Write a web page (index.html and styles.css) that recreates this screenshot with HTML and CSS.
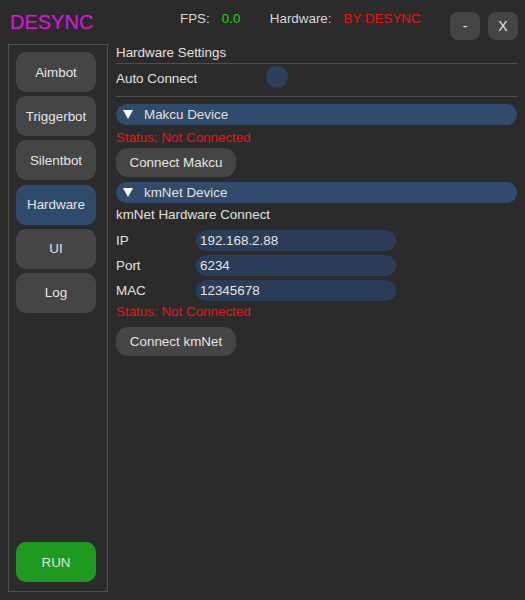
FILE: index.html
```html
<!DOCTYPE html>
<html>
<head>
<meta charset="utf-8">
<link rel="stylesheet" href="styles.css">
</head>
<body>
<div class="app">
  <header class="topbar">
    <div class="brand">DESYNC</div>
    <div class="stat"><span class="stat-label">FPS:</span><span class="fps">0.0</span></div>
    <div class="stat hw"><span class="stat-label">Hardware:</span><span class="by">BY DESYNC</span></div>
    <div class="win-btns">
      <button class="win-btn">-</button>
      <button class="win-btn">X</button>
    </div>
  </header>
  <div class="body">
    <nav class="sidebar">
      <button class="nav-btn">Aimbot</button>
      <button class="nav-btn">Triggerbot</button>
      <button class="nav-btn">Silentbot</button>
      <button class="nav-btn active">Hardware</button>
      <button class="nav-btn">UI</button>
      <button class="nav-btn">Log</button>
      <button class="nav-btn run">RUN</button>
    </nav>
    <main class="content">
      <div class="line title-line">Hardware Settings</div>
      <div class="sep sep-1"></div>
      <div class="toggle-row">
        <span class="toggle-label">Auto Connect</span>
        <span class="toggle"></span>
      </div>
      <div class="sep sep-2"></div>
      <div class="section-head makcu-head">
        <svg class="tri" width="10" height="9" viewBox="0 0 10 9"><polygon points="0,0 10,0 5,9" fill="#ffffff"/></svg>
        <span>Makcu Device</span>
      </div>
      <div class="line status status-1">Status: Not Connected</div>
      <button class="act-btn btn-1">Connect Makcu</button>
      <div class="section-head kmnet-head">
        <svg class="tri" width="10" height="9" viewBox="0 0 10 9"><polygon points="0,0 10,0 5,9" fill="#ffffff"/></svg>
        <span>kmNet Device</span>
      </div>
      <div class="line sub">kmNet Hardware Connect</div>
      <div class="fields">
        <div class="field"><span class="field-label">IP</span><span class="input">192.168.2.88</span></div>
        <div class="field"><span class="field-label">Port</span><span class="input">6234</span></div>
        <div class="field"><span class="field-label">MAC</span><span class="input">12345678</span></div>
      </div>
      <div class="line status status-2">Status: Not Connected</div>
      <button class="act-btn btn-2">Connect kmNet</button>
    </main>
  </div>
</div>
</body>
</html>
```

FILE: styles.css
```css
* { box-sizing: border-box; }
html, body {
  margin: 0;
  padding: 0;
  background: #2b2b2b;
}
body {
  width: 525px;
  height: 600px;
  overflow: hidden;
  font-family: "Liberation Sans", Arial, sans-serif;
  font-size: 13.4px;
  color: #e0e0e0;
}
button {
  font-family: "Liberation Sans", Arial, sans-serif;
  font-size: 13.4px;
  border: none;
  padding: 0;
  margin: 0;
  color: #e4e4e4;
  cursor: pointer;
}
.app {
  display: flex;
  flex-direction: column;
}
.topbar {
  height: 44px;
  display: flex;
  align-items: flex-start;
}
.brand {
  width: 170px;
  margin-left: 10px;
  margin-top: 12px;
  font-size: 20px;
  line-height: 20px;
  color: #e014e0;
}
.stat {
  margin-top: 11px;
  line-height: 15px;
  display: flex;
}
.stat-label { color: #d6d6d6; }
.fps {
  margin-left: 12px;
  color: #14d814;
  width: 48px;
}
.by {
  margin-left: 12px;
  color: #e81414;
}
.win-btns {
  margin-left: auto;
  margin-right: 7px;
  margin-top: 12px;
  display: flex;
  gap: 8px;
}
.win-btn {
  width: 30px;
  height: 28px;
  border-radius: 8px;
  background: #454545;
  font-size: 14px;
  color: #e6e6e6;
}
.body {
  display: flex;
  align-items: flex-start;
}
.sidebar {
  margin-left: 8px;
  width: 100px;
  height: 548px;
  border: 1px solid #4e4e4e;
  padding: 7px 10px 8px 7px;
  display: flex;
  flex-direction: column;
  gap: 4.2px;
}
.nav-btn {
  width: 80px;
  height: 40px;
  border-radius: 10px;
  background: #454545;
  flex-shrink: 0;
}
.nav-btn.active { background: #2f4b6c; }
.nav-btn.run {
  margin-top: auto;
  margin-bottom: 1px;
  background: #1e9b1e;
  color: #dde8dd;
}
.content {
  margin-left: 8px;
  width: 401px;
  display: flex;
  flex-direction: column;
  align-items: flex-start;
}
.line {
  line-height: 15px;
  height: 15px;
  white-space: nowrap;
}
.title-line { margin-top: 1px; }
.sep {
  width: 401px;
  height: 1px;
  background: #4f4f4f;
}
.sep-1 { margin-top: 3px; }
.toggle-row {
  margin-top: 2px;
  height: 22px;
  display: flex;
  align-items: flex-start;
}
.toggle-label {
  width: 150px;
  margin-top: 5px;
  line-height: 15px;
}
.toggle {
  width: 22px;
  height: 22px;
  border-radius: 50%;
  background: #2c3f5c;
}
.sep-2 { margin-top: 8px; }
.section-head {
  width: 401px;
  height: 21px;
  border-radius: 10.5px;
  background: #304b6b;
  display: flex;
  align-items: center;
  padding-left: 7px;
  line-height: 15px;
}
.section-head .tri {
  margin-right: 11px;
  flex-shrink: 0;
}
.makcu-head { margin-top: 7px; }
.status { color: #e81414; }
.status-1 { margin-top: 5px; }
.act-btn {
  width: 120px;
  height: 29px;
  border-radius: 12px;
  background: #454545;
}
.btn-1 { margin-top: 3px; }
.kmnet-head { margin-top: 5px; }
.sub { margin-top: 4px; }
.fields {
  margin-top: 8px;
  display: flex;
  flex-direction: column;
  gap: 4px;
}
.field {
  display: flex;
  align-items: center;
  height: 21px;
}
.field-label {
  width: 80px;
  line-height: 15px;
}
.input {
  width: 200px;
  height: 21px;
  border-radius: 10px;
  background: #2a3c58;
  padding-left: 4px;
  line-height: 21px;
  color: #e4e4e4;
}
.status-2 { margin-top: 3px; }
.btn-2 { margin-top: 8px; }
```
